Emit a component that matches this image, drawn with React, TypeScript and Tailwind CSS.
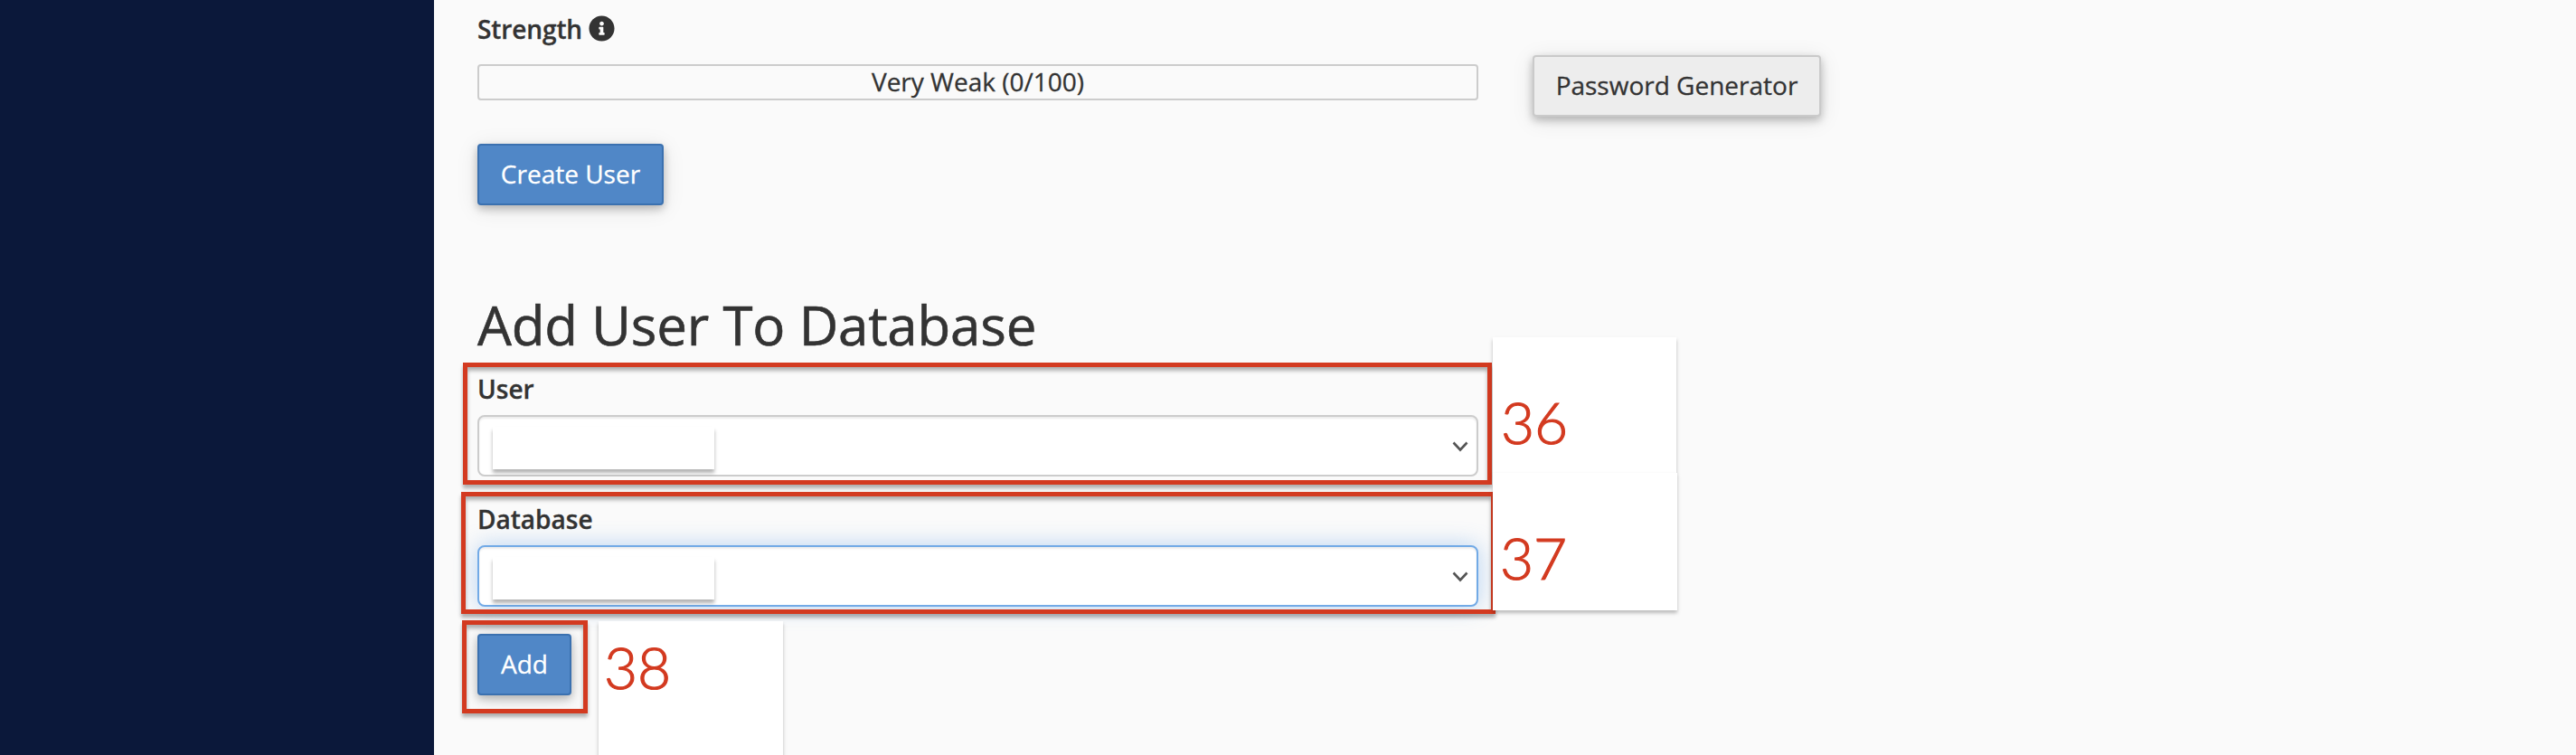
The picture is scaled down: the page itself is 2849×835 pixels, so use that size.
import type { ReactNode } from "react";
import { FaInfoCircle } from "react-icons/fa";

const callouts = [
  { label: "36", panel: "left-[1651px] top-[373px] h-[151px] w-[203px] pl-[9px] pt-[62px]" },
  { label: "37", panel: "left-[1651px] top-[523px] h-[152px] w-[204px] pl-[8px] pt-[62px]" },
  { label: "38", panel: "left-[662px] top-[687px] h-[170px] w-[204px] pl-[6px] pt-[19px]" },
];

const highlights = [
  "left-[512px] top-[401px] h-[135px] w-[1138px]",
  "left-[510px] top-[544px] h-[135px] w-[1144px]",
  "left-[511px] top-[686px] h-[103px] w-[139px]",
];

function Button({ children, primary, className = "" }: { children: ReactNode; primary?: boolean; className?: string }) {
  const color = primary
    ? "border-[#3b71b0] bg-[#5087c7] text-white"
    : "border-[#cacaca] bg-[#ededed] text-[#333]";
  return (
    <button
      className={`flex h-[68px] items-center justify-center rounded-[4px] border-2 pb-[2px] leading-10 shadow-[0_4px_10px_rgba(0,0,0,0.24),0_4px_24px_rgba(0,0,0,0.1)] ${color} ${className}`}
    >
      {children}
    </button>
  );
}

function SelectField({ label, focused }: { label: string; focused?: boolean }) {
  const border = focused
    ? "border-[#72aae6] shadow-[inset_0_2px_2px_rgba(0,0,0,0.075),0_0_24px_rgba(102,165,233,0.45)]"
    : "border-[#ccc] shadow-[inset_0_2px_2px_rgba(0,0,0,0.075)]";
  return (
    <div className="w-[1107px]">
      <label className="block h-[49px] font-semibold leading-10">{label}</label>
      <div className={`flex h-[68px] items-start justify-between rounded-[8px] border-2 bg-white pl-[15px] pr-[9px] ${border}`}>
        <div className="mt-[11px] h-[47px] w-[245px] bg-white shadow-[0_4px_4px_rgba(0,0,0,0.3)]" />
        <svg className="mt-[27px] h-[12px] w-[18px]" viewBox="0 0 18 12" fill="none" stroke="#555" strokeWidth="2.6">
          <path d="M1.5 1.5L9 9.5L16.5 1.5" />
        </svg>
      </div>
    </div>
  );
}

export default function App() {
  return (
    <div className="relative flex h-[835px] w-full overflow-hidden bg-[#fafafa] font-['Open_Sans',sans-serif] text-[28px] text-[#333] [-webkit-text-stroke:0.3px]">
      <aside className="w-[480px] shrink-0 bg-[#0b183a]" />

      <main className="flex flex-col items-start pl-12 pt-3">
        <div className="flex h-10 items-start gap-[7px]">
          <span className="font-semibold leading-10 tracking-[-0.1px]">Strength</span>
          <FaInfoCircle className="mt-[5px] size-[29px]" />
        </div>

        <div className="mt-[9px] flex items-start gap-[60px]">
          <div className="mt-[10px] h-10 w-[1107px] rounded-[4px] border-2 border-[#ccc] text-center leading-[34px]">
            Very Weak (0/100)
          </div>
          <Button className="w-[319px]">Password Generator</Button>
        </div>

        <Button primary className="mt-[30px] w-[206px]">
          Create User
        </Button>

        <h1 className="mt-[93px] h-[90px] text-[60px] leading-[78px] tracking-[-0.18px] [-webkit-text-stroke:0.6px]">
          Add User To Database
        </h1>

        <SelectField label="User" />
        <div className="mt-[27px]">
          <SelectField label="Database" focused />
        </div>

        <Button primary className="mt-[30px] w-[104px]">
          Add
        </Button>
      </main>

      {/* Step markers laid over the form */}
      {highlights.map((box) => (
        <div
          key={box}
          className={`absolute border-[5px] border-[#d33a20] shadow-[0_4px_4px_rgba(0,0,0,0.3),inset_0_4px_4px_rgba(0,0,0,0.3)] ${box}`}
        />
      ))}
      {callouts.map(({ label, panel }) => (
        <div
          key={label}
          className={`absolute bg-white font-[Lato,sans-serif] text-[64px] font-light leading-[64px] text-[#d33a20] shadow-[0_3px_4px_rgba(0,0,0,0.25)] [-webkit-text-stroke:1.2px] ${panel}`}
        >
          {label}
        </div>
      ))}
    </div>
  );
}
